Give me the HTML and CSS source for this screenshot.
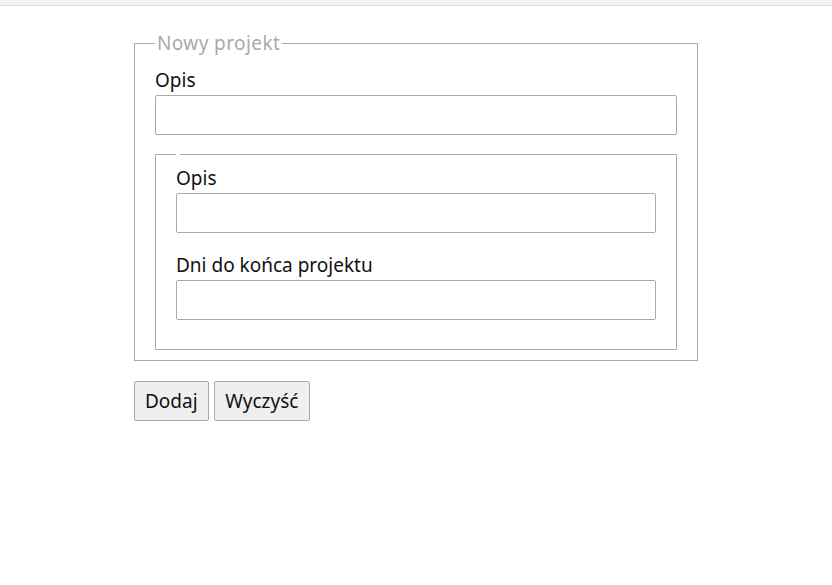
FILE: index.html
```html
<!DOCTYPE html>
<html lang="pl">
<head>
<meta charset="utf-8">
<title>Nowy projekt</title>
<link rel="stylesheet" href="styles.css">
</head>
<body>
<div class="topbar"></div>
<main class="page">
  <form class="form">
    <fieldset class="group">
      <legend class="group-title">Nowy projekt</legend>
      <div class="field">
        <label class="label" for="opis1">Opis</label>
        <input class="input" id="opis1" type="text">
      </div>
      <fieldset class="group inner">
        <legend class="group-title empty"></legend>
        <div class="field">
          <label class="label" for="opis2">Opis</label>
          <input class="input" id="opis2" type="text">
        </div>
        <div class="field">
          <label class="label" for="dni">Dni do końca projektu</label>
          <input class="input" id="dni" type="text">
        </div>
      </fieldset>
    </fieldset>
    <div class="actions">
      <button class="btn" type="submit">Dodaj</button>
      <button class="btn btn-wide" type="reset">Wyczyść</button>
    </div>
  </form>
</main>
</body>
</html>
```
FILE: styles.css
```css
html, body {
  margin: 0;
  padding: 0;
  background: #fff;
}
body {
  font-family: "Noto Sans", "Open Sans", sans-serif;
  font-size: 19px;
  color: #111;
}
.topbar {
  height: 5px;
  background: #f3f3f3;
  border-bottom: 1px solid #dcdcdc;
}
.page {
  width: 564px;
  margin: 0 auto;
  padding-top: 26px;
}
.form {
  display: flex;
  flex-direction: column;
}
.group {
  margin: 0;
  padding: 13px 20px 10px;
  border: 1px solid #aaa;
  display: flex;
  flex-direction: column;
}
.group.inner {
  margin-top: 19px;
  padding: 11px 20px 29px;
}
.group-title {
  padding: 0 2px;
  color: #aaa;
  font-size: 19px;
  line-height: 23px;
  letter-spacing: 0.4px;
}
.group-title.empty {
  height: 0;
  line-height: 0;
}
.field {
  display: flex;
  flex-direction: column;
}
.field + .field {
  margin-top: 20px;
}
.label {
  line-height: 24px;
  margin-bottom: 3px;
}
.input {
  box-sizing: border-box;
  height: 40px;
  width: 100%;
  border: 1px solid #aaa;
  border-radius: 2px;
  font: inherit;
  padding: 0 8px;
  background: #fff;
}
.actions {
  display: flex;
  gap: 5px;
  margin-top: 20px;
}
.btn {
  box-sizing: border-box;
  height: 40px;
  padding: 0 10px;
  font: inherit;
  color: #111;
  background: #efefef;
  border: 1px solid #aaa;
  border-radius: 2px;
}
.btn-wide {
  padding: 0 10.5px;
}
```
